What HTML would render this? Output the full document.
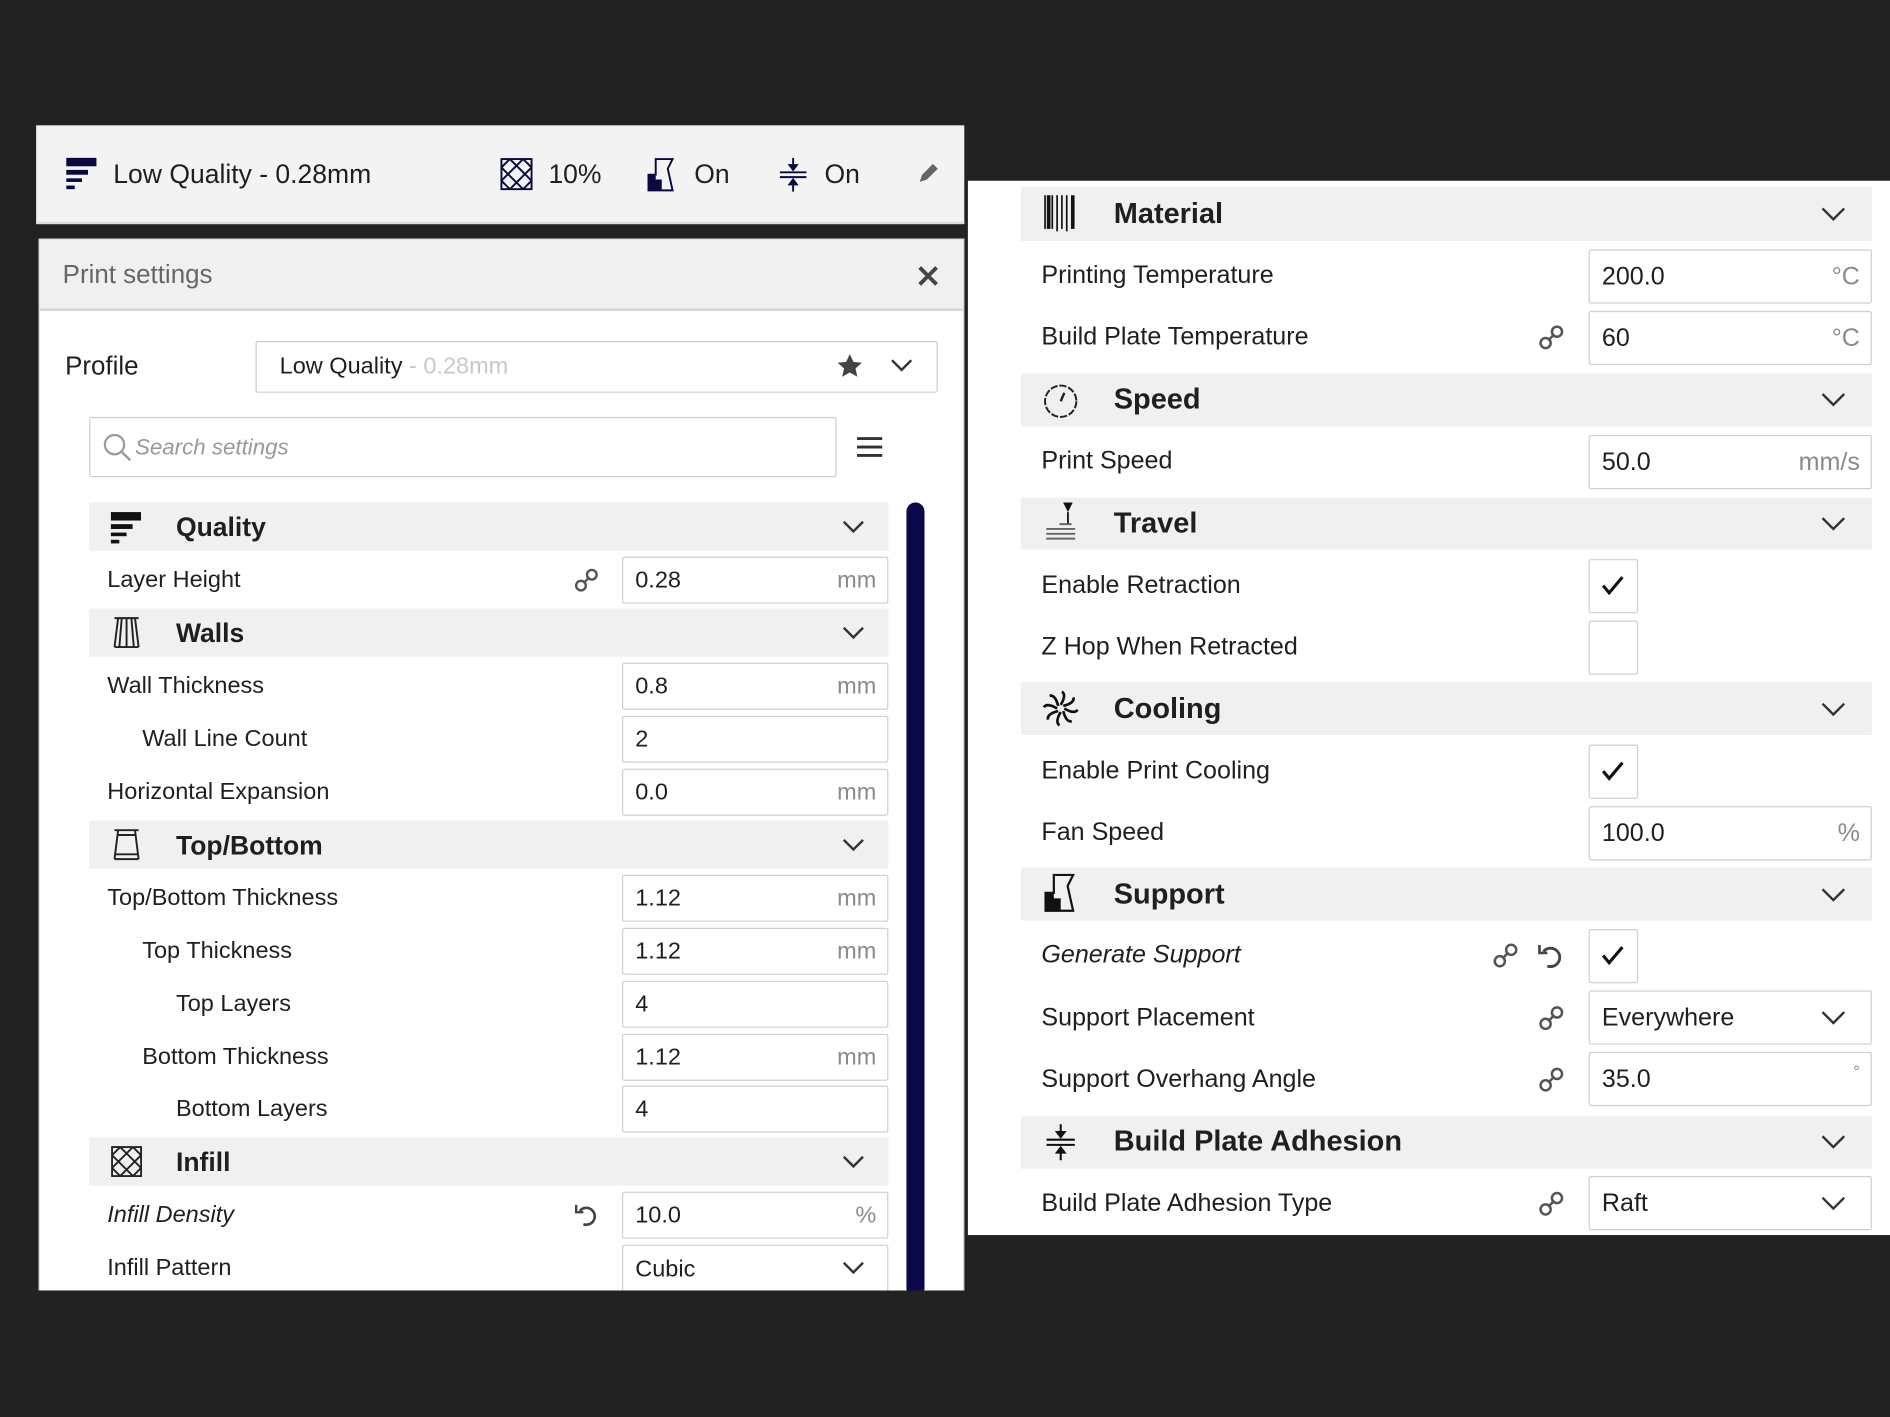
<!DOCTYPE html>
<html><head><meta charset="utf-8"><style>
*{margin:0;padding:0;box-sizing:border-box}
html,body{width:1890px;height:1417px;overflow:hidden;background:#222222}
#s{position:absolute;left:0;top:0;width:1568px;height:1176px;transform:scale(1.20536,1.20493);transform-origin:0 0;font-family:"Liberation Sans",sans-serif;color:#1f1f1f}
.a{position:absolute}
.t{position:absolute;white-space:nowrap;line-height:1}
.hdr{position:absolute;background:#f0f0f0}
.inp{position:absolute;background:#fff;border:1.5px solid #cfcfcf;border-radius:2px}
.inp .v{position:absolute;left:10px;top:50%;transform:translateY(-50%);white-space:nowrap}
.inp .u{position:absolute;right:9px;top:50%;transform:translateY(-50%);color:#8a8a8a;white-space:nowrap}
.chev{position:absolute}
.L{font-size:19.5px}
.R{font-size:20.8px}
</style></head><body><div id="s">

<!-- LEFT PANEL -->
<div class="a" style="left:30px;top:104px;width:770px;height:82px;background:#f3f3f3;border-bottom:2px solid #dcdcdc"></div>
<svg class="a" style="left:54px;top:130px" width="28" height="28" viewBox="0 0 28 28"><rect x="1" y="1" width="25" height="7" fill="#0a0a40"/><rect x="1" y="11" width="18" height="4" fill="#0a0a40"/><rect x="1" y="18" width="13" height="3" fill="#0a0a40"/><rect x="1" y="24" width="7" height="3" fill="#0a0a40"/></svg>
<div class="t" style="left:94px;top:134px;font-size:22px">Low Quality - 0.28mm</div>
<svg class="a" style="left:415px;top:131px" width="27" height="27" viewBox="0 0 27 27" fill="none" stroke="#0a0a40" stroke-width="1.6"><rect x="1" y="1" width="25" height="25"/><path d="M1 8 8 1M1 19 19 1M8 26 26 8M19 26 26 19M1 8 19 26M1 19 8 26M8 1 26 19M19 1 26 8"/></svg>
<div class="t" style="left:455px;top:134px;font-size:22px">10%</div>
<svg class="a" style="left:536px;top:131px" width="26" height="28" viewBox="0 0 26 28"><path d="M8 1h14l-4 8 4 18H2V14h6z" fill="none" stroke="#0a0a40" stroke-width="1.6"/><path d="M2 14h6v4h5v9H2z" fill="#0a0a40"/></svg>
<div class="t" style="left:576px;top:134px;font-size:22px">On</div>
<svg class="a" style="left:646px;top:130px" width="24" height="30" viewBox="0 0 24 30" stroke="#0a0a40" stroke-width="1.6"><path d="M1 13h22M1 17h22M12 1v9M12 20v9"/><path d="M9 7l3 4 3-4zM9 23l3-4 3 4z" fill="#0a0a40"/></svg>
<div class="t" style="left:684px;top:134px;font-size:22px">On</div>
<svg class="a" style="left:760px;top:134px" width="20" height="20" viewBox="0 0 20 20"><path d="M3 17l2-6 9-9 4 4-9 9z" fill="#666"/></svg>

<div class="a" style="left:32px;top:198px;width:768px;height:874px;background:#fff;border:1.5px solid #d6d6d6;border-bottom:none"></div>
<div class="a" style="left:33px;top:199px;width:766px;height:59px;background:#f0f0f0;border-bottom:2px solid #d2d2d2"></div>
<div class="t" style="left:52px;top:218px;font-size:21.5px;color:#666">Print settings</div>
<svg class="a" style="left:760px;top:219px" width="20" height="20" viewBox="0 0 20 20"><path d="M3 3l14 14M17 3L3 17" stroke="#444" stroke-width="3.2"/></svg>

<div class="t" style="left:54px;top:294px;font-size:21.5px">Profile</div>
<div class="a" style="left:212px;top:283px;width:566px;height:43px;border:1.5px solid #cdcdcd;border-radius:2px;background:#fff"></div>
<div class="t" style="left:232px;top:295px;font-size:19.5px">Low Quality <span style="color:#c8c8c8">- 0.28mm</span></div>
<svg class="a" style="left:694px;top:293px" width="22" height="21" viewBox="0 0 24 23"><path d="M12 1l3.3 7 7.7.8-5.8 5.2 1.7 7.6L12 17.7 5.1 21.6l1.7-7.6L1 8.8l7.7-.8z" fill="#444"/></svg>
<svg class="chev" style="left:738px;top:297px" width="20" height="13" viewBox="0 0 20 13"><path d="M2 2l8 8 8-8" fill="none" stroke="#333" stroke-width="2"/></svg>

<div class="a" style="left:74px;top:346px;width:620px;height:50px;border:1.5px solid #cdcdcd;border-radius:2px"></div>
<svg class="a" style="left:85px;top:359px" width="25" height="25" viewBox="0 0 25 25"><circle cx="10" cy="10" r="8" fill="none" stroke="#999" stroke-width="1.8"/><path d="M16 16l7 7" stroke="#999" stroke-width="2"/></svg>
<div class="t" style="left:112px;top:362px;font-size:18.5px;font-style:italic;color:#999">Search settings</div>
<svg class="a" style="left:711px;top:362px" width="21" height="18" viewBox="0 0 21 18"><path d="M0 2h21M0 9h21M0 16h21" stroke="#333" stroke-width="2.4"/></svg>

<div class="a" style="left:752px;top:417px;width:15px;height:660px;background:#0a0a4a;border-radius:8px"></div>

<div class="hdr" style="left:74px;top:417px;width:663px;height:40px"></div>
<svg class="a" style="left:91px;top:424px" width="28" height="28" viewBox="0 0 28 28"><rect x="1" y="1" width="25" height="7" fill="#111"/><rect x="1" y="11" width="18" height="4" fill="#111"/><rect x="1" y="18" width="13" height="3" fill="#111"/><rect x="1" y="24" width="7" height="3" fill="#111"/></svg>
<div class="t" style="left:146px;top:427px;font-size:22px;font-weight:bold">Quality</div>
<svg class="chev" style="left:698px;top:431px" width="20" height="13" viewBox="0 0 20 13"><path d="M2 2l8 8 8-8" fill="none" stroke="#333" stroke-width="2"/></svg>

<div class="t L" style="left:89px;top:472px">Layer Height</div>
<svg class="a" style="left:476px;top:471px" width="21" height="21" viewBox="0 0 21 21" fill="none" stroke="#555" stroke-width="2"><circle cx="6" cy="15" r="4"/><circle cx="15" cy="6" r="4"/><path d="M8 13l5-5"/></svg>
<div class="inp L" style="left:516px;top:462px;width:221px;height:39px"><span class="v">0.28</span><span class="u">mm</span></div>

<div class="hdr" style="left:74px;top:505px;width:663px;height:40px"></div>
<svg class="a" style="left:92px;top:512px" width="26" height="26" viewBox="0 0 26 26" fill="none" stroke="#222" stroke-width="1.6"><path d="M3 1h20M3 25h20M6 1l-3 24M20 1l3 24M9 1l-2 24M17 1l2 24M13 1v24"/></svg>
<div class="t" style="left:146px;top:515px;font-size:22px;font-weight:bold">Walls</div>
<svg class="chev" style="left:698px;top:519px" width="20" height="13" viewBox="0 0 20 13"><path d="M2 2l8 8 8-8" fill="none" stroke="#333" stroke-width="2"/></svg>

<div class="t L" style="left:89px;top:560px">Wall Thickness</div>
<div class="inp L" style="left:516px;top:550px;width:221px;height:39px"><span class="v">0.8</span><span class="u">mm</span></div>
<div class="t L" style="left:118px;top:604px">Wall Line Count</div>
<div class="inp L" style="left:516px;top:594px;width:221px;height:39px"><span class="v">2</span></div>
<div class="t L" style="left:89px;top:648px">Horizontal Expansion</div>
<div class="inp L" style="left:516px;top:638px;width:221px;height:39px"><span class="v">0.0</span><span class="u">mm</span></div>

<div class="hdr" style="left:74px;top:681px;width:663px;height:40px"></div>
<svg class="a" style="left:92px;top:688px" width="26" height="26" viewBox="0 0 26 26" fill="none" stroke="#222" stroke-width="1.6"><path d="M3 1h20M3 25h20M6 1l-3 24M20 1l3 24M5 5h16M4 21h18"/></svg>
<div class="t" style="left:146px;top:691px;font-size:22px;font-weight:bold">Top/Bottom</div>
<svg class="chev" style="left:698px;top:695px" width="20" height="13" viewBox="0 0 20 13"><path d="M2 2l8 8 8-8" fill="none" stroke="#333" stroke-width="2"/></svg>

<div class="t L" style="left:89px;top:736px">Top/Bottom Thickness</div>
<div class="inp L" style="left:516px;top:726px;width:221px;height:39px"><span class="v">1.12</span><span class="u">mm</span></div>
<div class="t L" style="left:118px;top:780px">Top Thickness</div>
<div class="inp L" style="left:516px;top:770px;width:221px;height:39px"><span class="v">1.12</span><span class="u">mm</span></div>
<div class="t L" style="left:146px;top:824px">Top Layers</div>
<div class="inp L" style="left:516px;top:814px;width:221px;height:39px"><span class="v">4</span></div>
<div class="t L" style="left:118px;top:868px">Bottom Thickness</div>
<div class="inp L" style="left:516px;top:858px;width:221px;height:39px"><span class="v">1.12</span><span class="u">mm</span></div>
<div class="t L" style="left:146px;top:911px">Bottom Layers</div>
<div class="inp L" style="left:516px;top:901px;width:221px;height:39px"><span class="v">4</span></div>

<div class="hdr" style="left:74px;top:944px;width:663px;height:40px"></div>
<svg class="a" style="left:92px;top:951px" width="26" height="26" viewBox="0 0 27 27" fill="none" stroke="#222" stroke-width="1.6"><rect x="1" y="1" width="25" height="25"/><path d="M1 8 8 1M1 19 19 1M8 26 26 8M19 26 26 19M1 8 19 26M1 19 8 26M8 1 26 19M19 1 26 8"/></svg>
<div class="t" style="left:146px;top:954px;font-size:22px;font-weight:bold">Infill</div>
<svg class="chev" style="left:698px;top:958px" width="20" height="13" viewBox="0 0 20 13"><path d="M2 2l8 8 8-8" fill="none" stroke="#333" stroke-width="2"/></svg>

<div class="t L" style="left:89px;top:999px;font-style:italic">Infill Density</div>
<svg class="a" style="left:476px;top:997px" width="22" height="22" viewBox="0 0 22 22" fill="none" stroke="#444" stroke-width="2.2"><path d="M5 8a7 7 0 1 1 3 11"/><path d="M2 3v6h6" stroke-width="2"/></svg>
<div class="inp L" style="left:516px;top:989px;width:221px;height:39px"><span class="v">10.0</span><span class="u">%</span></div>
<div class="t L" style="left:89px;top:1043px">Infill Pattern</div>
<div class="inp L" style="left:516px;top:1033px;width:221px;height:42px"><span class="v">Cubic</span></div>
<svg class="chev" style="left:698px;top:1046px" width="20" height="13" viewBox="0 0 20 13"><path d="M2 2l8 8 8-8" fill="none" stroke="#333" stroke-width="2"/></svg>
<div class="a" style="left:0;top:1071px;width:1568px;height:105px;background:#222"></div>

<!-- RIGHT PANEL -->
<div class="a" style="left:803px;top:150px;width:765px;height:875px;background:#fff"></div>

<div class="hdr" style="left:847px;top:155px;width:706px;height:45px"></div>
<svg class="a" style="left:865px;top:160px" width="30" height="34" viewBox="0 0 30 34" stroke="#111"><path d="M2 2v28M8 2v28M12 2v30M16 2v28M20 2v30" stroke-width="1.4"/><path d="M5 2v28M25 2v28" stroke-width="3"/></svg>
<div class="t" style="left:924px;top:166px;font-size:24px;font-weight:bold">Material</div>
<svg class="chev" style="left:1510px;top:171px" width="22" height="14" viewBox="0 0 22 14"><path d="M2 2l9 9 9-9" fill="none" stroke="#333" stroke-width="2"/></svg>

<div class="t R" style="left:864px;top:219px">Printing Temperature</div>
<div class="inp R" style="left:1318px;top:207px;width:235px;height:45px"><span class="v">200.0</span><span class="u">°C</span></div>
<div class="t R" style="left:864px;top:270px">Build Plate Temperature</div>
<svg class="a" style="left:1276px;top:269px" width="22" height="22" viewBox="0 0 21 21" fill="none" stroke="#555" stroke-width="2"><circle cx="6" cy="15" r="4"/><circle cx="15" cy="6" r="4"/><path d="M8 13l5-5"/></svg>
<div class="inp R" style="left:1318px;top:258px;width:235px;height:45px"><span class="v">60</span><span class="u">°C</span></div>

<div class="hdr" style="left:847px;top:310px;width:706px;height:44px"></div>
<svg class="a" style="left:865px;top:316px" width="30" height="32" viewBox="0 0 30 32" fill="none" stroke="#222" stroke-width="1.6"><circle cx="15" cy="17" r="13" stroke-dasharray="6 1.5"/><path d="M15 17l3-7" stroke-width="2"/></svg>
<div class="t" style="left:924px;top:320px;font-size:24px;font-weight:bold">Speed</div>
<svg class="chev" style="left:1510px;top:325px" width="22" height="14" viewBox="0 0 22 14"><path d="M2 2l9 9 9-9" fill="none" stroke="#333" stroke-width="2"/></svg>

<div class="t R" style="left:864px;top:373px">Print Speed</div>
<div class="inp R" style="left:1318px;top:361px;width:235px;height:45px"><span class="v">50.0</span><span class="u">mm/s</span></div>

<div class="hdr" style="left:847px;top:413px;width:706px;height:43px"></div>
<svg class="a" style="left:865px;top:415px" width="30" height="36" viewBox="0 0 30 36"><path d="M17 2h8l-4 8z" fill="#111"/><path d="M21 10v10" stroke="#111" stroke-width="1.5"/><path d="M3 24h24M3 28h24M3 32h24M14 20h10" stroke="#666" stroke-width="1.6"/></svg>
<div class="t" style="left:924px;top:423px;font-size:24px;font-weight:bold">Travel</div>
<svg class="chev" style="left:1510px;top:428px" width="22" height="14" viewBox="0 0 22 14"><path d="M2 2l9 9 9-9" fill="none" stroke="#333" stroke-width="2"/></svg>

<div class="t R" style="left:864px;top:476px">Enable Retraction</div>
<div class="inp" style="left:1318px;top:464px;width:41px;height:45px"></div>
<svg class="a" style="left:1328px;top:477px" width="20" height="18" viewBox="0 0 20 18"><path d="M2 9l5 6L18 2" fill="none" stroke="#111" stroke-width="2.6"/></svg>
<div class="t R" style="left:864px;top:527px">Z Hop When Retracted</div>
<div class="inp" style="left:1318px;top:515px;width:41px;height:45px"></div>

<div class="hdr" style="left:847px;top:566px;width:706px;height:44px"></div>
<svg class="a" style="left:865px;top:573px" width="30" height="30" viewBox="-15 -15 30 30" stroke="#111" stroke-width="2.2" fill="none"><g id="b"><path d="M0 -3C3 -8 4 -12 1 -14"/></g><use href="#b" transform="rotate(45)"/><use href="#b" transform="rotate(90)"/><use href="#b" transform="rotate(135)"/><use href="#b" transform="rotate(180)"/><use href="#b" transform="rotate(225)"/><use href="#b" transform="rotate(270)"/><use href="#b" transform="rotate(315)"/></svg>
<div class="t" style="left:924px;top:577px;font-size:24px;font-weight:bold">Cooling</div>
<svg class="chev" style="left:1510px;top:582px" width="22" height="14" viewBox="0 0 22 14"><path d="M2 2l9 9 9-9" fill="none" stroke="#333" stroke-width="2"/></svg>

<div class="t R" style="left:864px;top:630px">Enable Print Cooling</div>
<div class="inp" style="left:1318px;top:618px;width:41px;height:45px"></div>
<svg class="a" style="left:1328px;top:631px" width="20" height="18" viewBox="0 0 20 18"><path d="M2 9l5 6L18 2" fill="none" stroke="#111" stroke-width="2.6"/></svg>
<div class="t R" style="left:864px;top:681px">Fan Speed</div>
<div class="inp R" style="left:1318px;top:669px;width:235px;height:45px"><span class="v">100.0</span><span class="u">%</span></div>

<div class="hdr" style="left:847px;top:720px;width:706px;height:44px"></div>
<svg class="a" style="left:865px;top:725px" width="30" height="32" viewBox="0 0 26 28"><path d="M8 1h14l-4 8 4 18H2V14h6z" fill="none" stroke="#111" stroke-width="1.6"/><path d="M2 14h6v4h5v9H2z" fill="#111"/></svg>
<div class="t" style="left:924px;top:731px;font-size:24px;font-weight:bold">Support</div>
<svg class="chev" style="left:1510px;top:736px" width="22" height="14" viewBox="0 0 22 14"><path d="M2 2l9 9 9-9" fill="none" stroke="#333" stroke-width="2"/></svg>

<div class="t R" style="left:864px;top:783px;font-style:italic">Generate Support</div>
<svg class="a" style="left:1238px;top:782px" width="22" height="22" viewBox="0 0 21 21" fill="none" stroke="#555" stroke-width="2"><circle cx="6" cy="15" r="4"/><circle cx="15" cy="6" r="4"/><path d="M8 13l5-5"/></svg>
<svg class="a" style="left:1275px;top:781px" width="24" height="24" viewBox="0 0 22 22" fill="none" stroke="#444" stroke-width="2.2"><path d="M5 8a7 7 0 1 1 3 11"/><path d="M2 3v6h6" stroke-width="2"/></svg>
<div class="inp" style="left:1318px;top:771px;width:41px;height:45px"></div>
<svg class="a" style="left:1328px;top:784px" width="20" height="18" viewBox="0 0 20 18"><path d="M2 9l5 6L18 2" fill="none" stroke="#111" stroke-width="2.6"/></svg>
<div class="t R" style="left:864px;top:835px">Support Placement</div>
<svg class="a" style="left:1276px;top:834px" width="22" height="22" viewBox="0 0 21 21" fill="none" stroke="#555" stroke-width="2"><circle cx="6" cy="15" r="4"/><circle cx="15" cy="6" r="4"/><path d="M8 13l5-5"/></svg>
<div class="inp R" style="left:1318px;top:822px;width:235px;height:45px"><span class="v">Everywhere</span></div>
<svg class="chev" style="left:1510px;top:838px" width="22" height="14" viewBox="0 0 22 14"><path d="M2 2l9 9 9-9" fill="none" stroke="#333" stroke-width="2"/></svg>
<div class="t R" style="left:864px;top:886px">Support Overhang Angle</div>
<svg class="a" style="left:1276px;top:885px" width="22" height="22" viewBox="0 0 21 21" fill="none" stroke="#555" stroke-width="2"><circle cx="6" cy="15" r="4"/><circle cx="15" cy="6" r="4"/><path d="M8 13l5-5"/></svg>
<div class="inp R" style="left:1318px;top:873px;width:235px;height:45px"><span class="v">35.0</span><span class="u" style="top:35%;font-size:14px">°</span></div>

<div class="hdr" style="left:847px;top:926px;width:706px;height:44px"></div>
<svg class="a" style="left:867px;top:932px" width="26" height="32" viewBox="0 0 24 30" stroke="#111" stroke-width="1.6"><path d="M1 13h22M1 17h22M12 1v9M12 20v9"/><path d="M9 7l3 4 3-4zM9 23l3-4 3 4z" fill="#111"/></svg>
<div class="t" style="left:924px;top:936px;font-size:24px;font-weight:bold">Build Plate Adhesion</div>
<svg class="chev" style="left:1510px;top:941px" width="22" height="14" viewBox="0 0 22 14"><path d="M2 2l9 9 9-9" fill="none" stroke="#333" stroke-width="2"/></svg>

<div class="t R" style="left:864px;top:989px">Build Plate Adhesion Type</div>
<svg class="a" style="left:1276px;top:988px" width="22" height="22" viewBox="0 0 21 21" fill="none" stroke="#555" stroke-width="2"><circle cx="6" cy="15" r="4"/><circle cx="15" cy="6" r="4"/><path d="M8 13l5-5"/></svg>
<div class="inp R" style="left:1318px;top:976px;width:235px;height:45px"><span class="v">Raft</span></div>
<svg class="chev" style="left:1510px;top:992px" width="22" height="14" viewBox="0 0 22 14"><path d="M2 2l9 9 9-9" fill="none" stroke="#333" stroke-width="2"/></svg>

</div></body></html>
